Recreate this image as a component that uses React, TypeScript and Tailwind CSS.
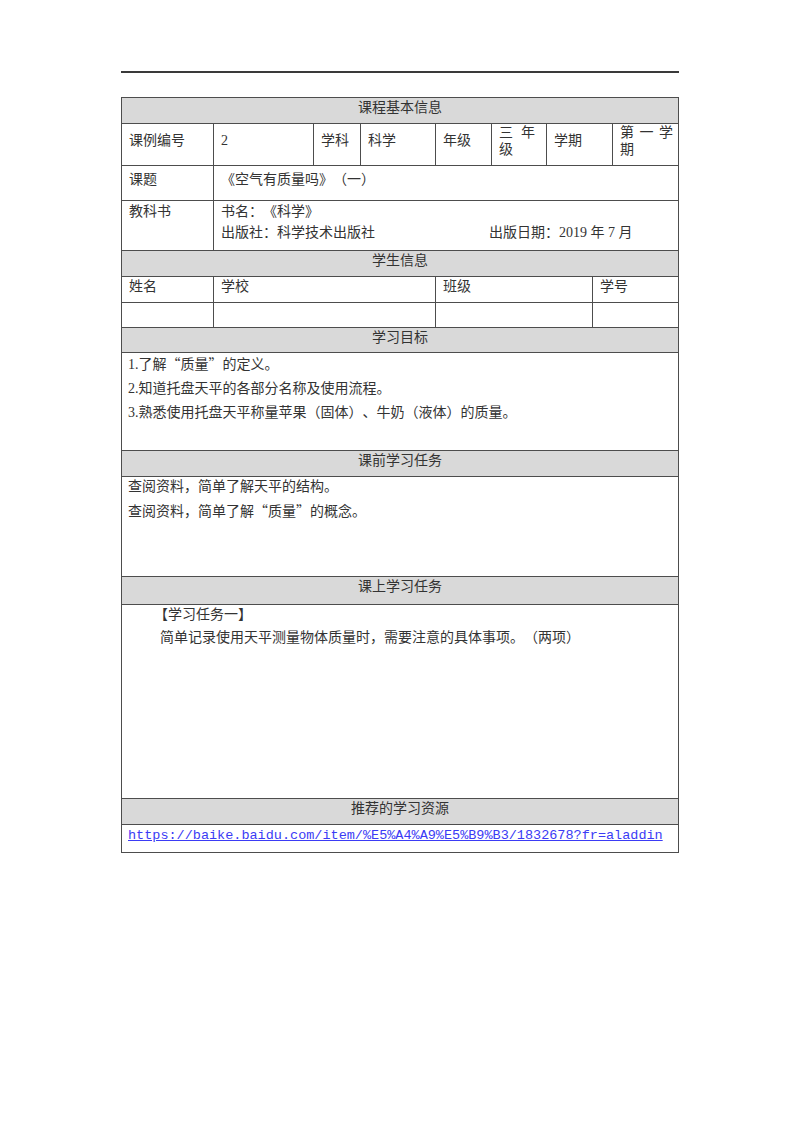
import clsx from 'clsx'
import type { ReactNode } from 'react'

// Lesson worksheet: a single bordered form table under a rule line.

function Row({ className, last, children }: { className: string; last?: boolean; children: ReactNode }) {
  return (
    <div className={clsx('flex', !last && 'border-b border-[#4d4d4d]', className)}>
      {children}
    </div>
  )
}

function Cell({ className, last, children }: { className?: string; last?: boolean; children?: ReactNode }) {
  return (
    <div className={clsx(!last && 'border-r border-[#4d4d4d]', 'pl-[7px]', className)}>
      {children}
    </div>
  )
}

function SectionHeader({ title, className }: { title: string; className: string }) {
  return (
    <Row className={clsx('justify-center bg-[#d9d9d9]', className)}>
      <span>{title}</span>
    </Row>
  )
}

// curly quotes come from the CJK font so they stay full width
function Q({ children }: { children: ReactNode }) {
  return <span className="font-['Noto_Sans_CJK_SC',sans-serif]">{children}</span>
}

export default function App() {
  return (
    <div className="min-h-[1132px] bg-white font-['Liberation_Serif','Noto_Sans_CJK_SC',serif] text-[14px] leading-[20px] text-[#333] [text-spacing-trim:space-all]">
      <div className="mx-auto w-[558px] pt-[71px]">
        <div className="h-[2px] bg-[#3a3a3a]" />

        <div className="mt-[24px] border border-[#4d4d4d]">
          <SectionHeader title="课程基本信息" className="h-[26px]" />

          <Row className="h-[42px]">
            <Cell className="w-[92px] pt-[7px]">课例编号</Cell>
            <Cell className="w-[100px] pt-[7px]">2</Cell>
            <Cell className="w-[47px] pt-[7px]">学科</Cell>
            <Cell className="w-[75px] pt-[7px]">科学</Cell>
            <Cell className="w-[56px] pt-[7px]">年级</Cell>
            <Cell className="w-[55px] pr-[11px] leading-[17px]">
              <div className="flex justify-between">
                <span>三</span>
                <span>年</span>
              </div>
              <div>级</div>
            </Cell>
            <Cell className="w-[66px] pt-[7px]">学期</Cell>
            <Cell last className="flex-1 pr-[5px] leading-[17px]">
              <div className="flex justify-between">
                <span>第</span>
                <span>一</span>
                <span>学</span>
              </div>
              <div>期</div>
            </Cell>
          </Row>

          <Row className="h-[35px]">
            <Cell className="w-[92px] pt-[4px]">课题</Cell>
            <Cell last className="flex-1 pt-[4px]">《空气有质量吗》（一）</Cell>
          </Row>

          <Row className="h-[50px] leading-[21px]">
            <Cell className="w-[92px]">教科书</Cell>
            <Cell last className="flex-1">
              <div>书名：《科学》</div>
              <div className="flex">
                <span className="w-[268px]">出版社：科学技术出版社</span>
                <span>出版日期：2019 年 7 月</span>
              </div>
            </Cell>
          </Row>

          <SectionHeader title="学生信息" className="h-[26px]" />

          <Row className="h-[26px]">
            <Cell className="w-[92px]">姓名</Cell>
            <Cell className="w-[222px]">学校</Cell>
            <Cell className="w-[157px] pl-[6px]">班级</Cell>
            <Cell last className="flex-1 pl-[6px]">学号</Cell>
          </Row>

          <Row className="h-[25px]">
            <Cell className="w-[92px]" />
            <Cell className="w-[222px]" />
            <Cell className="w-[157px]" />
            <Cell last className="flex-1" />
          </Row>

          <SectionHeader title="学习目标" className="h-[25px]" />

          <Row className="h-[98px] flex-col pl-[6px]">
            <p className="mb-[4px]">1.了解<Q>“</Q>质量<Q>”</Q>的定义。</p>
            <p className="mb-[4px]">2.知道托盘天平的各部分名称及使用流程。</p>
            <p>3.熟悉使用托盘天平称量苹果（固体）、牛奶（液体）的质量。</p>
          </Row>

          <SectionHeader title="课前学习任务" className="h-[26px]" />

          <Row className="h-[100px] flex-col pl-[6px]">
            <p className="mb-[3px]">查阅资料，简单了解天平的结构。</p>
            <p>查阅资料，简单了解<Q>“</Q>质量<Q>”</Q>的概念。</p>
          </Row>

          <SectionHeader title="课上学习任务" className="h-[28px]" />

          <Row className="h-[194px] flex-col">
            <p className="mb-[3px] pl-[32px]">【学习任务一】</p>
            <p className="pl-[38px]">简单记录使用天平测量物体质量时，需要注意的具体事项。（两项）</p>
          </Row>

          <SectionHeader title="推荐的学习资源" className="h-[26px]" />

          <Row last className="h-[27px] pl-[6px] pt-[1px]">
            <a
              href="#"
              className="font-['Liberation_Mono',monospace] text-[13.5px] text-[#3b3bf5] underline"
            >
              https://baike.baidu.com/item/%E5%A4%A9%E5%B9%B3/1832678?fr=aladdin
            </a>
          </Row>
        </div>
      </div>
    </div>
  )
}
